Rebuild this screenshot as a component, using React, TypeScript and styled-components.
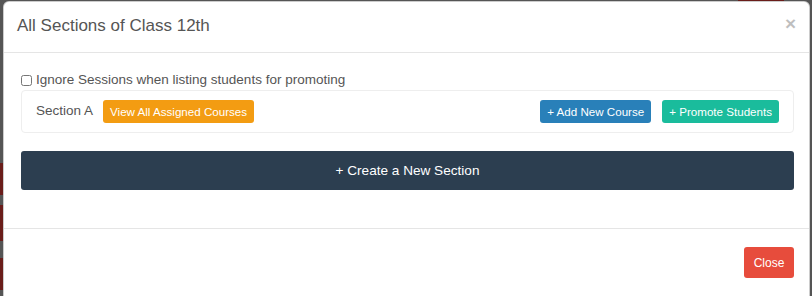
import React from 'react';
import styled, { createGlobalStyle } from 'styled-components';

const GlobalStyle = createGlobalStyle`
  html, body {
    margin: 0;
    padding: 0;
    background: #585858;
    font-family: "Liberation Sans", Arial, sans-serif;
  }
`;

const Backdrop = styled.div`
  position: relative;
  width: 812px;
  height: 296px;
  overflow: hidden;
  background: #555;
`;

const Stain = styled.div<{ $top: number; $left: number; $w: number; $h: number }>`
  position: absolute;
  top: ${p => p.$top}px;
  left: ${p => p.$left}px;
  width: ${p => p.$w}px;
  height: ${p => p.$h}px;
  background: #6a1d1a;
`;

const Modal = styled.div`
  position: absolute;
  top: 1px;
  left: 3px;
  width: 807px;
  height: 320px;
  background: #fff;
  border: 1px solid rgba(0, 0, 0, 0.2);
  border-radius: 6px;
  box-sizing: border-box;
  display: flex;
  flex-direction: column;
`;

const Header = styled.div`
  height: 51px;
  box-sizing: border-box;
  padding: 0 13px 0 13px;
  border-bottom: 1px solid #e5e5e5;
  display: flex;
  align-items: center;
  justify-content: space-between;
`;

const Title = styled.h4`
  margin: -2px 0 0;
  font-size: 17px;
  font-weight: normal;
  color: #555;
  line-height: 20px;
`;

const CloseX = styled.button`
  border: 0;
  background: none;
  padding: 0;
  margin-top: -7px;
  font-family: "Liberation Sans", Arial, sans-serif;
  font-size: 19px;
  font-weight: bold;
  line-height: 1;
  color: #000;
  opacity: 0.25;
  cursor: pointer;
`;

const Body = styled.div`
  padding: 17px 15px 38px 17px;
  border-bottom: 1px solid #e5e5e5;
`;

const CheckRow = styled.label`
  display: flex;
  align-items: center;
  gap: 4px;
  font-size: 13.5px;
  color: #555;
  line-height: 20px;
`;

const Check = styled.input`
  margin: 0;
  width: 11px;
  height: 11px;
`;

const Panel = styled.div`
  border: 1px solid #eee;
  border-radius: 4px;
  height: 43px;
  box-sizing: border-box;
  padding: 0 14px 0 14px;
  display: flex;
  align-items: center;
  gap: 10px;
`;

const SectionName = styled.span`
  font-size: 13.5px;
  color: #555;
  margin-top: -3px;
`;

const Spacer = styled.div`
  flex: 1;
`;

const SmallBtn = styled.button<{ $bg: string }>`
  height: 23px;
  padding: 0 7px;
  border: 0;
  border-radius: 3px;
  background: ${p => p.$bg};
  color: #fff;
  font-family: "Liberation Sans", Arial, sans-serif;
  font-size: 11.6px;
  line-height: 23px;
  cursor: pointer;
`;

const RightGroup = styled.div`
  display: flex;
  gap: 11px;
`;

const CreateBtn = styled.button`
  display: block;
  width: 100%;
  height: 39px;
  margin-top: 18px;
  border: 0;
  border-radius: 3px;
  background: #2c3e50;
  color: #fff;
  font-family: "Liberation Sans", Arial, sans-serif;
  font-size: 13.6px;
  cursor: pointer;
`;

const Footer = styled.div`
  padding: 18px 15px 15px;
  display: flex;
  justify-content: flex-end;
`;

const CloseBtn = styled.button`
  height: 31px;
  width: 50px;
  padding: 0;
  border: 0;
  border-radius: 3px;
  background: #e74c3c;
  color: #fff;
  font-family: "Liberation Sans", Arial, sans-serif;
  font-size: 12px;
  cursor: pointer;
`;

export default function App() {
  return (
    <>
      <GlobalStyle />
      <Backdrop>
        <Stain $top={163} $left={0} $w={3} $h={32} />
        <Stain $top={205} $left={0} $w={3} $h={36} />
        <Stain $top={258} $left={0} $w={3} $h={32} />
        <Stain $top={0} $left={738} $w={46} $h={2} />
        <Modal>
          <Header>
            <Title>All Sections of Class 12th</Title>
            <CloseX aria-label="Close">×</CloseX>
          </Header>
          <Body>
            <CheckRow>
              <Check type="checkbox" />
              Ignore Sessions when listing students for promoting
            </CheckRow>
            <Panel>
              <SectionName>Section A</SectionName>
              <SmallBtn $bg="#f39c12">View All Assigned Courses</SmallBtn>
              <Spacer />
              <RightGroup>
                <SmallBtn $bg="#2980b9">+ Add New Course</SmallBtn>
                <SmallBtn $bg="#1abc9c">+ Promote Students</SmallBtn>
              </RightGroup>
            </Panel>
            <CreateBtn>+ Create a New Section</CreateBtn>
          </Body>
          <Footer>
            <CloseBtn>Close</CloseBtn>
          </Footer>
        </Modal>
      </Backdrop>
    </>
  );
}
